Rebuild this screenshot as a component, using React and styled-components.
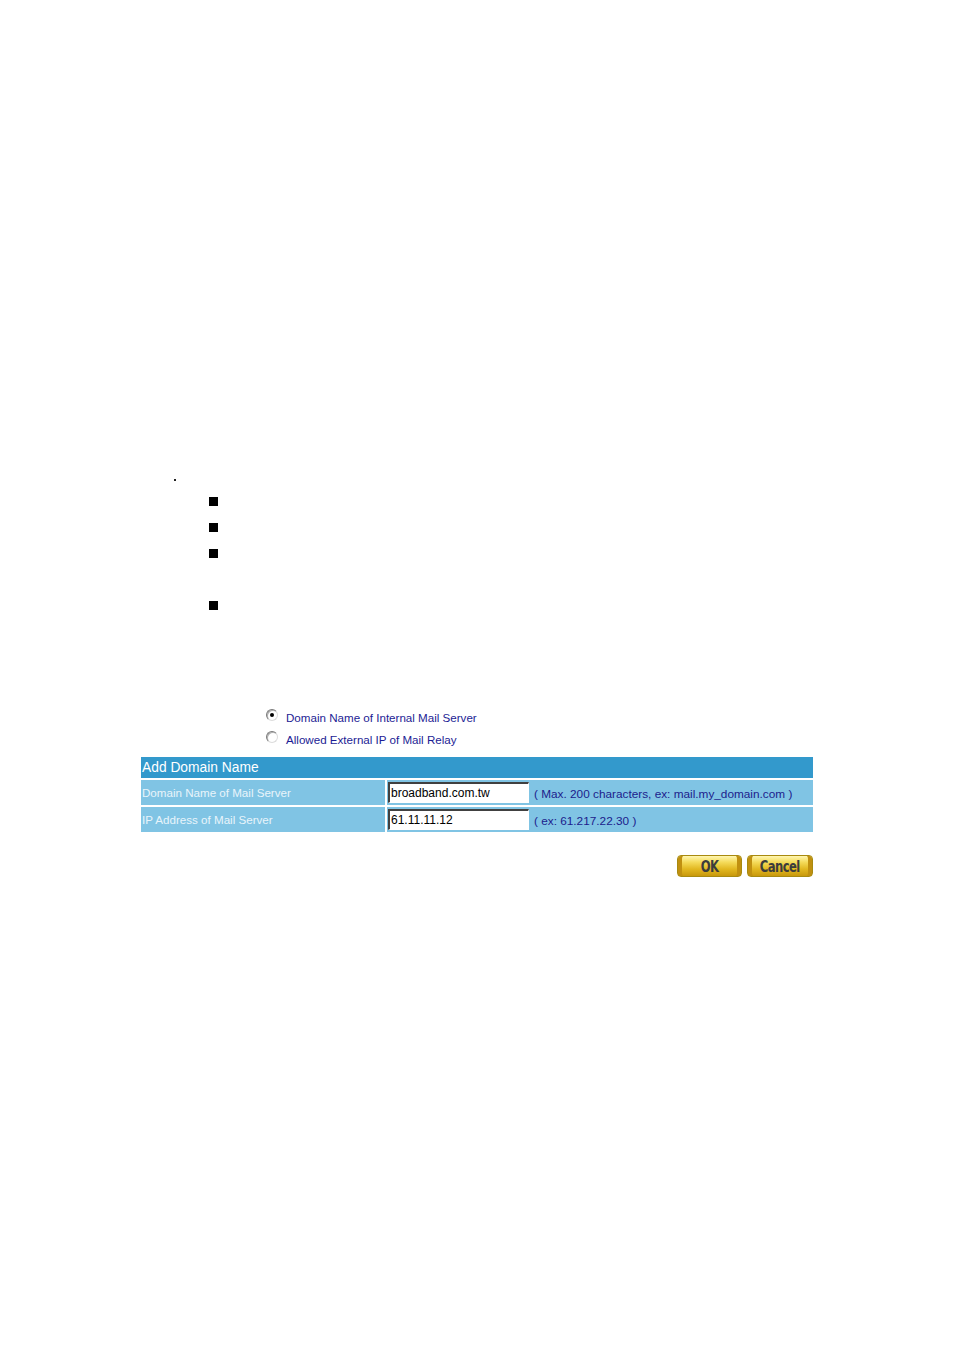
import React, { useState } from 'react';
import styled, { createGlobalStyle } from 'styled-components';

const GlobalStyle = createGlobalStyle`
  html, body {
    margin: 0;
    padding: 0;
    background: #fff;
  }
  body {
    font-family: "Liberation Sans", Arial, sans-serif;
  }
`;

const Page = styled.div`
  width: 954px;
  height: 1350px;
  box-sizing: border-box;
  padding: 479px 0 0 141px;
`;

const Dot = styled.div`
  width: 2px;
  height: 2px;
  margin-left: 33px;
  background: #222;
`;

const BulletList = styled.ul`
  list-style: none;
  margin: 14px 0 0 68px;
  padding: 0;
`;

const Bullet = styled.li`
  height: ${(p) => (p.tall ? 52 : 26)}px;
  display: flex;
  align-items: flex-start;
  &::before {
    content: '';
    display: block;
    width: 9px;
    height: 9px;
    margin-top: 2px;
    background: #000;
  }
`;

const RadioGroup = styled.div`
  margin: 85px 0 0 125px;
  display: flex;
  flex-direction: column;
  gap: 8px;
`;

const RadioRow = styled.label`
  display: flex;
  align-items: center;
  height: 14px;
  font-size: 11.6px;
  color: #1c1c94;
  cursor: pointer;
`;

const RadioCircle = styled.span`
  width: 12px;
  height: 12px;
  box-sizing: border-box;
  border-radius: 50%;
  border: 1px solid #7a7a7a;
  border-right-color: #dcdcdc;
  border-bottom-color: #dcdcdc;
  box-shadow: inset 1px 1px 0 #b0b0b0;
  background: #fff;
  margin: -4px 8px 0 0;
  display: flex;
  align-items: center;
  justify-content: center;
  &::after {
    content: '';
    width: 4px;
    height: 4px;
    border-radius: 50%;
    background: ${(p) => (p.checked ? '#000' : 'transparent')};
  }
`;

const Table = styled.div`
  margin-top: 11px;
  width: 672px;
  display: grid;
  grid-template-columns: 244px 1fr;
  gap: 2px 2px;
`;

const HeaderCell = styled.div`
  grid-column: 1 / -1;
  height: 21px;
  background: #3399cc;
  color: #fff;
  font-size: 13.8px;
  line-height: 21px;
  padding-left: 1px;
`;

const LabelCell = styled.div`
  height: 25px;
  background: #80c4e4;
  color: #e8f4fb;
  font-size: 11.6px;
  display: flex;
  align-items: center;
  padding-left: 1px;
`;

const InputCell = styled.div`
  height: 25px;
  background: #80c4e4;
  display: flex;
  align-items: center;
  padding-left: 1px;
  gap: 5px;
`;

const TextInput = styled.input`
  width: 141px;
  height: 21px;
  box-sizing: border-box;
  border: 1px solid #fff;
  border-top: 2px solid #404040;
  border-left: 2px solid #404040;
  background: #fff;
  font-family: "Liberation Sans", Arial, sans-serif;
  font-size: 12px;
  color: #000;
  padding: 0 1px;
  outline: none;
`;

const Hint = styled.span`
  font-size: 11.8px;
  color: #1c1c8c;
  margin-top: 3px;
`;

const ButtonBar = styled.div`
  width: 672px;
  margin-top: 23px;
  display: flex;
  justify-content: flex-end;
  gap: 5px;
`;

const GoldButton = styled.button`
  width: ${(p) => p.w}px;
  height: 22px;
  padding: 0;
  border: 1px solid #a88a10;
  border-radius: 4px;
  background: linear-gradient(
    to bottom,
    #fff6b0 0%,
    #f5dc5c 30%,
    #e2b820 65%,
    #c8980c 100%
  );
  box-shadow: inset 5px 0 0 -1px #c09010, inset -5px 0 0 -1px #c09010;
  font-family: "DejaVu Sans Condensed", "Liberation Sans Narrow", sans-serif;
  font-weight: bold;
  font-size: 14px;
  color: #3c3c3c;
  letter-spacing: -0.6px;
  cursor: pointer;
  span {
    display: inline-block;
    transform: scale(0.92, 1.12);
  }
`;

const App = () => {
  const [mode, setMode] = useState('internal');
  const [domain, setDomain] = useState('broadband.com.tw');
  const [ip, setIp] = useState('61.11.11.12');

  return (
    <Page>
      <GlobalStyle />
      <Dot />
      <BulletList>
        <Bullet />
        <Bullet />
        <Bullet tall />
        <Bullet />
      </BulletList>

      <RadioGroup>
        <RadioRow onClick={() => setMode('internal')}>
          <RadioCircle checked={mode === 'internal'} />
          Domain Name of Internal Mail Server
        </RadioRow>
        <RadioRow onClick={() => setMode('external')}>
          <RadioCircle checked={mode === 'external'} />
          Allowed External IP of Mail Relay
        </RadioRow>
      </RadioGroup>

      <Table>
        <HeaderCell>Add Domain Name</HeaderCell>
        <LabelCell>Domain Name of Mail Server</LabelCell>
        <InputCell>
          <TextInput value={domain} onChange={(e) => setDomain(e.target.value)} />
          <Hint>( Max. 200 characters, ex: mail.my_domain.com )</Hint>
        </InputCell>
        <LabelCell>IP Address of Mail Server</LabelCell>
        <InputCell>
          <TextInput value={ip} onChange={(e) => setIp(e.target.value)} />
          <Hint>( ex: 61.217.22.30 )</Hint>
        </InputCell>
      </Table>

      <ButtonBar>
        <GoldButton w={65}><span>OK</span></GoldButton>
        <GoldButton w={66}><span>Cancel</span></GoldButton>
      </ButtonBar>
    </Page>
  );
};

export default App;
